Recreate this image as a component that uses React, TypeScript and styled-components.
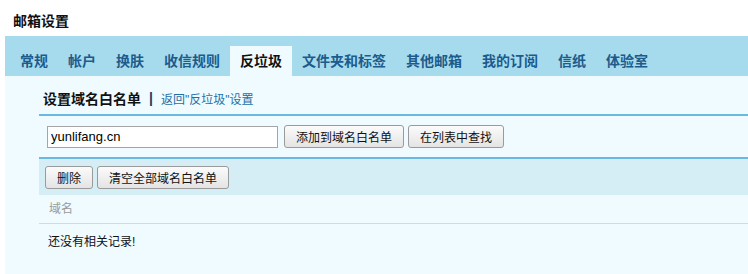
import styled, { createGlobalStyle } from "styled-components";

const GlobalStyle = createGlobalStyle`
  body {
    margin: 0;
    background: #fff;
    font-family: "Liberation Sans", "Noto Sans CJK SC", sans-serif;
    color: #000;
  }
`;

const Page = styled.div`
  width: 748px;
  height: 274px;
  overflow: hidden;
`;

const Title = styled.h1`
  margin: 0;
  height: 36px;
  padding-left: 13px;
  font-size: 14px;
  font-weight: bold;
  line-height: 42px;
  color: #111;
`;

const TabBar = styled.ul`
  display: flex;
  align-items: flex-end;
  margin: 0 0 0 5px;
  padding: 10px 0 0 5px;
  height: 30px;
  list-style: none;
  background: #a6dbee;
`;

const Tab = styled.li<{ $active?: boolean }>`
  height: 30px;
  padding: 0 10px;
  font-size: 14px;
  font-weight: bold;
  line-height: 30px;
  color: ${(p) => (p.$active ? "#111" : "#1d5b8c")};
  background: ${(p) => (p.$active ? "#effbff" : "transparent")};
  cursor: pointer;
`;

const Content = styled.div`
  margin-left: 5px;
  padding-left: 34px;
  height: 198px;
  background: #effbff;
`;

const Heading = styled.div`
  display: flex;
  align-items: center;
  gap: 8px;
  height: 40px;
  padding: 6px 0 0 4px;
  box-sizing: border-box;
  border-bottom: 2px solid #6ab9e1;
`;

const HeadingTitle = styled.span`
  font-size: 14px;
  font-weight: bold;
  color: #111;
`;

const Divider = styled.span`
  font-size: 14px;
  font-weight: bold;
  color: #1d3a5c;
`;

const BackLink = styled.a`
  font-size: 12px;
  color: #1f6ea6;
  text-decoration: none;
  cursor: pointer;
`;

const SearchRow = styled.div`
  display: flex;
  align-items: center;
  gap: 4px;
  height: 41px;
  padding-left: 8px;
  border-bottom: 2px solid #6ab9e1;
`;

const DomainInput = styled.input`
  width: 231px;
  height: 22px;
  box-sizing: border-box;
  margin: 0 2px 0 0;
  padding: 0 3px;
  border: 1px solid #a5a5a5;
  font-family: "Liberation Sans", "Noto Sans CJK SC", sans-serif;
  font-size: 13px;
  color: #000;
  background: #fff;
  outline: none;
`;

const Button = styled.button`
  height: 23px;
  padding: 0 11px;
  border: 1px solid #9a9a9a;
  border-radius: 3px;
  background: linear-gradient(#fbfbfb, #e4e4e4);
  font-family: "Liberation Sans", "Noto Sans CJK SC", sans-serif;
  font-size: 12px;
  color: #111;
  cursor: pointer;
`;

const Toolbar = styled.div`
  display: flex;
  align-items: center;
  gap: 4px;
  height: 36px;
  padding-left: 6px;
  background: #d5eef5;
`;

const ListHeader = styled.div`
  height: 28px;
  padding-left: 10px;
  line-height: 29px;
  font-size: 12px;
  color: #9a9a9a;
  border-bottom: 1px solid #c0e2ef;
`;

const Empty = styled.div`
  padding: 8px 0 0 9px;
  font-size: 12px;
  color: #111;
`;

const tabs = [
  "常规",
  "帐户",
  "换肤",
  "收信规则",
  "反垃圾",
  "文件夹和标签",
  "其他邮箱",
  "我的订阅",
  "信纸",
  "体验室",
];

export default function App() {
  return (
    <Page>
      <GlobalStyle />
      <Title>邮箱设置</Title>
      <TabBar>
        {tabs.map((t) => (
          <Tab key={t} $active={t === "反垃圾"}>
            {t}
          </Tab>
        ))}
      </TabBar>
      <Content>
        <Heading>
          <HeadingTitle>设置域名白名单</HeadingTitle>
          <Divider>|</Divider>
          <BackLink>返回"反垃圾"设置</BackLink>
        </Heading>
        <SearchRow>
          <DomainInput defaultValue="yunlifang.cn" />
          <Button>添加到域名白名单</Button>
          <Button>在列表中查找</Button>
        </SearchRow>
        <Toolbar>
          <Button>删除</Button>
          <Button>清空全部域名白名单</Button>
        </Toolbar>
        <ListHeader>域名</ListHeader>
        <Empty>还没有相关记录!</Empty>
      </Content>
    </Page>
  );
}
